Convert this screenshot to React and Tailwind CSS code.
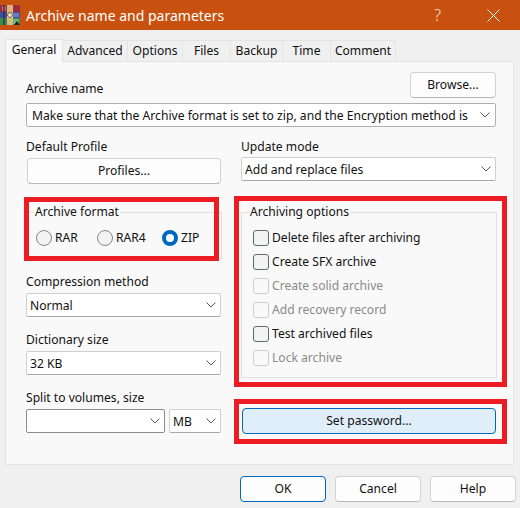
const Chevron = () => (
  <svg width="10" height="6" viewBox="0 0 10 6" fill="none" stroke="#555" strokeWidth="1" className="shrink-0">
    <polyline points="0.5,0.5 5,5 9.5,0.5" />
  </svg>
);

const Select = ({ value, className = 'border-[#d0d0d0] border-b-[#a8a8a8]' , width = '' }) => (
  <div className={`flex h-[24px] items-center justify-between rounded-[2px] border bg-white pl-[3px] pr-[4px] ${className} ${width}`}>
    <span className="whitespace-nowrap pt-[2px]">{value}</span>
    <Chevron />
  </div>
);

const Button = ({ children, className = '', border = 'border-[#d2d2d2] border-b-[#b8b8b8]' }) => (
  <div className={`flex items-center justify-center rounded-[4px] border bg-[#fdfdfd] pt-[1px] ${border} ${className}`}>
    {children}
  </div>
);

const Label = ({ children }) => <div className="flex h-[20px] items-center">{children}</div>;

const Radio = ({ label, checked, className = '' }) => (
  <div className={`flex items-center gap-[3px] ${className}`}>
    {checked ? (
      <div className="h-[16px] w-[16px] rounded-full border-[4px] border-[#0067c0] bg-white" />
    ) : (
      <div className="h-[16px] w-[16px] rounded-full border border-[#858585] bg-[#f3f3f3]" />
    )}
    <span>{label}</span>
  </div>
);

const Check = ({ label, disabled }) => (
  <div className={`flex h-[24px] items-center gap-[3px] ${disabled ? 'text-[#8a8a8a]' : ''}`}>
    <div className={`h-[16px] w-[16px] rounded-[3px] border ${disabled ? 'border-[#cccccc] bg-[#f9f9f9]' : 'border-[#5f6b6b] bg-[#f3f3f3]'}`} />
    <span>{label}</span>
  </div>
);

const tabs = [
  ['General', 'w-[58px]'],
  ['Advanced', 'w-[65px]'],
  ['Options', 'w-[55px]'],
  ['Files', 'w-[48px]'],
  ['Backup', 'w-[52px]'],
  ['Time', 'w-[48px]'],
  ['Comment', 'w-[65px]'],
];

const WinrarIcon = () => (
  <svg width="21" height="20" viewBox="0 0 21 20" className="shrink-0">
    <rect x="0" y="0" width="20" height="7" fill="#9c2b3c" />
    <rect x="2" y="1" width="4" height="5" fill="#c9656c" />
    <rect x="0" y="7" width="20" height="6" fill="#3b4f9e" />
    <rect x="13" y="8" width="6" height="4" fill="#6b7cc4" />
    <rect x="0" y="13" width="20" height="7" fill="#3c8a4e" />
    <rect x="13" y="14" width="6" height="5" fill="#6fb27c" />
    <rect x="3" y="0" width="2" height="20" fill="#2b2b3a" opacity="0.6" />
    <rect x="7" y="0" width="6" height="20" fill="#d9b779" />
    <rect x="7" y="8" width="6" height="5" fill="#f1e4c8" />
    <circle cx="10" cy="10" r="2.5" fill="none" stroke="#7a5a2a" />
    <path d="M14 20 L17 16 L20 20 Z" fill="#222" />
  </svg>
);

export default function App() {
  return (
    <div className="relative flex h-[508px] w-[520px] flex-col overflow-hidden bg-[#f0f0f0] font-['Noto_Sans',sans-serif] text-[12.1px] text-[#111]">
      <div className="flex h-[30px] shrink-0 items-center bg-[#c9510f] text-white">
        <WinrarIcon />
        <span className="ml-[5px] text-[14px]">Archive name and parameters</span>
        <span className="ml-auto mr-[46px] text-[16px] font-light text-[#f7e3d6]">?</span>
        <svg width="13" height="13" viewBox="0 0 13 13" stroke="#fff" strokeWidth="1" className="mr-[20px]">
          <path d="M0.5 0.5 L12.5 12.5 M12.5 0.5 L0.5 12.5" />
        </svg>
      </div>

      <div className="flex h-[31px] shrink-0 items-end pl-[5px]">
        {tabs.map(([name, width], i) => (
          <div
            key={name}
            className={
              i === 0
                ? `z-10 -mb-px flex h-[23px] items-start justify-center border border-b-0 border-[#e4e4e4] bg-[#f9f9f9] pt-[1px] ${width}`
                : `flex h-[21px] items-center justify-center border border-b-0 border-l-0 border-[#e4e4e4] bg-[#f0f0f0] pt-[1px] ${width}`
            }
          >
            {name}
          </div>
        ))}
      </div>

      <div className="ml-[5px] h-[404px] w-[509px] shrink-0 border border-[#e4e4e4] bg-[#f9f9f9] pl-[20px] pr-[17px] pt-[10px]">
        <div className="flex h-[26px] items-end justify-between">
          <div className="flex h-[20px] items-center pt-[3px]">Archive name</div>
          <Button className="h-[26px] w-[86px]">Browse...</Button>
        </div>
        <div className="mt-[5px] flex h-[24px] items-center justify-between rounded-[2px] border border-[#b0b0b0] bg-white pl-[5px] pr-[5px]">
          <span className="whitespace-nowrap pt-[2px] text-[12.15px]">Make sure that the Archive format is set to zip, and the Encryption method is</span>
          <Chevron />
        </div>

        <div className="mt-[10px] flex gap-[20px]">
          <div className="w-[195px] shrink-0">
            <Label>Default Profile</Label>
            <Button className="ml-[1px] mt-[1px] h-[26px] w-[194px]">Profiles...</Button>
            <fieldset className="mt-[20px] h-[55px] w-[196px] border border-[#e0e0e0] pl-[7px]">
              <legend className="px-[1px] leading-[16px]">Archive format</legend>
              <div className="mt-[9px] flex">
                <Radio label="RAR" className="ml-[2px] w-[61px]" />
                <Radio label="RAR4" className="w-[65px]" />
                <Radio label="ZIP" checked />
              </div>
            </fieldset>
            <div className="mt-[13px]">
              <Label>Compression method</Label>
              <div className="mt-[1px]"><Select value="Normal" /></div>
            </div>
            <div className="mt-[13px]">
              <Label>Dictionary size</Label>
              <div className="mt-[1px]"><Select value="32 KB" /></div>
            </div>
            <div className="mt-[13px]">
              <Label>Split to volumes, size</Label>
              <div className="mt-[1px] flex gap-[4px]">
                <Select value="" className="border-[#8c8c8c]" width="w-[139px]" />
                <Select value="MB" width="w-[52px]" />
              </div>
            </div>
          </div>

          <div className="w-[255px] shrink-0">
            <Label>Update mode</Label>
            <Select value="Add and replace files" />
            <fieldset className="mt-[23px] h-[174px] w-[256px] border border-[#e0e0e0] pl-[11px]">
              <legend className="-ml-[4px] px-[1px] leading-[16px]">Archiving options</legend>
              <div className="mt-[6px]">
                <Check label="Delete files after archiving" />
                <Check label="Create SFX archive" />
                <Check label="Create solid archive" disabled />
                <Check label="Add recovery record" disabled />
                <Check label="Test archived files" />
                <Check label="Lock archive" disabled />
              </div>
            </fieldset>
            <div className="ml-[1px] mt-[30px] flex h-[26px] w-[254px] items-center justify-center rounded-[4px] border border-[#0067c0] bg-[#e0eef9] pt-[1px]">
              Set password...
            </div>
          </div>
        </div>
      </div>

      <div className="mt-[11px] flex gap-[9px] pl-[240px]">
        <Button className="h-[26px] w-[86px]" border="border-[#0067c0]">OK</Button>
        <Button className="h-[26px] w-[86px]">Cancel</Button>
        <Button className="h-[26px] w-[86px]">Help</Button>
      </div>

      <div className="absolute left-[24px] top-[197px] h-[64px] w-[195px] border-[5px] border-[#ed1c24]" />
      <div className="absolute left-[234px] top-[196px] h-[191px] w-[273px] border-[5px] border-[#ed1c24]" />
      <div className="absolute left-[234px] top-[399px] h-[45px] w-[273px] border-[5px] border-[#ed1c24]" />
    </div>
  );
}
